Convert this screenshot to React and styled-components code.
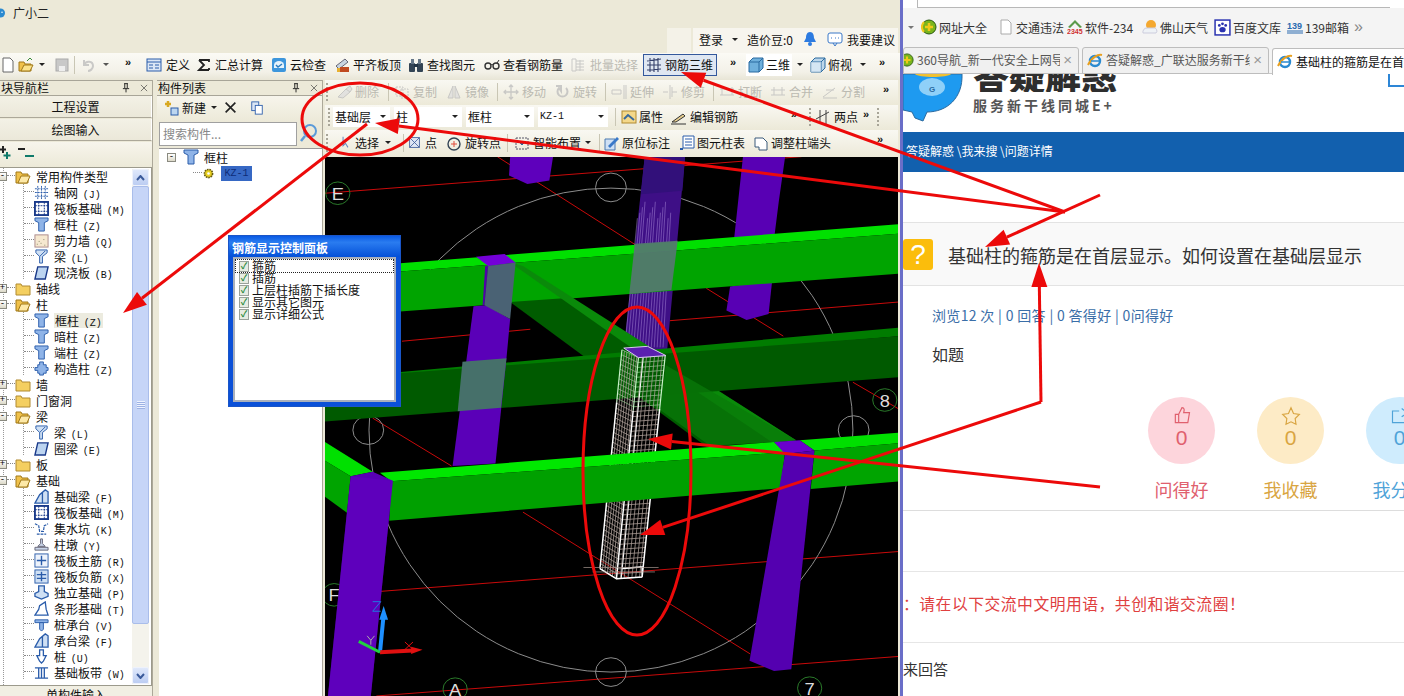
import React from 'react'
import styled, { createGlobalStyle } from 'styled-components'

const CJK = '"Noto Sans CJK SC", "Liberation Sans", sans-serif'
const MONO = '"Liberation Mono", "Noto Sans CJK SC", monospace'
const WEB = '"Liberation Sans", "Noto Sans CJK SC", sans-serif'

const Global = createGlobalStyle`
  html, body { margin: 0; padding: 0; background: #fff; overflow: hidden; }
  * { box-sizing: border-box; }
`

const Page = styled.div`
  width: 1404px;
  height: 696px;
  position: relative;
  overflow: hidden;
  display: flex;
  font-family: ${CJK};
  font-size: 12px;
  color: #111;
`

/* ---------- left: desktop app ---------- */

const AppWindow = styled.div`
  width: 900px;
  height: 696px;
  flex: none;
  display: flex;
  flex-direction: column;
  background: #ece9d8;
  overflow: hidden;
`

const TitleArea = styled.div`
  height: 53px;
  flex: none;
  display: flex;
  flex-direction: column;
  justify-content: space-between;
`

const TitleRow = styled.div`
  display: flex;
  align-items: center;
  gap: 5px;
  height: 24px;
  padding-top: 1px;
  font-size: 12px;
  color: #222;
  svg { margin-left: -4px; }
`

const UserRow = styled.div`
  align-self: flex-end;
  display: flex;
  height: 25px;
  margin-right: 2px;
  gap: 2px;
`

const UserBlank = styled.div`
  width: 24px;
  background: #f4f2e8;
`

const UserBar = styled.div`
  width: 205px;
  display: flex;
  align-items: center;
  padding: 0 0 3px 6px;
  gap: 9px;
  background: #f7f5ee;
`

const Caret = styled.i`
  display: inline-block;
  flex: none;
  width: 0;
  height: 0;
  border-left: 3px solid transparent;
  border-right: 3px solid transparent;
  border-top: 3px solid #222;
  margin: 0 ${p => p.$m || 0}px;
`

const ToolRow = styled.div`
  height: ${p => p.$h || 27}px;
  flex: none;
  display: flex;
  align-items: center;
  padding-bottom: 4px;
  overflow: hidden;
  white-space: nowrap;
  background: linear-gradient(#fbfaf5, #f3f1e8 70%, #e8e5d6);
`

const Tool = styled.div`
  flex: none;
  width: ${p => p.$w}px;
  height: 22px;
  display: flex;
  align-items: center;
  gap: ${p => p.$gap ?? 3}px;
  padding-left: ${p => p.$pad ?? 2}px;
  color: ${p => (p.$off ? '#a9a8a0' : '#111')};
  opacity: ${p => (p.$off ? 0.75 : 1)};
  background: ${p => (p.$white ? '#fff' : 'transparent')};
`

const ActiveTool = styled(Tool)`
  margin-left: 2px;
  border: 1px solid #33589c;
  background: #dfe7f2;
`

const More = styled.span`
  flex: none;
  width: ${p => p.$w || 14}px;
  margin-left: ${p => p.$ml || 0}px;
  font: bold 11px ${WEB};
  align-self: flex-start;
  padding-top: 3px;
  color: #111;
`

const Sep = styled.span`
  flex: none;
  width: 1px;
  height: 18px;
  background: #c9c6b4;
  margin: 0 ${p => p.$m ?? 3}px;
`

const Grip = styled.span`
  flex: none;
  width: 2px;
  height: 18px;
  margin: 0 ${p => p.$m ?? 3}px;
  background: repeating-linear-gradient(#a8a598 0 2px, transparent 2px 4px);
`

const Main = styled.div`
  flex: 1;
  display: flex;
  min-height: 0;
`

const NavPanel = styled.div`
  width: 153px;
  flex: none;
  display: flex;
  flex-direction: column;
  border-right: 1px solid #aca899;
`

const ListPanel = styled.div`
  width: 166px;
  flex: none;
  margin-left: 4px;
  display: flex;
  flex-direction: column;
  border-right: 1px solid #aca899;
`

const PanelHead = styled.div`
  height: 16px;
  flex: none;
  display: flex;
  align-items: center;
  justify-content: space-between;
  padding: 0 3px 0 1px;
  font-size: 12px;
  line-height: 14px;
  background: #ece9d8;
  border-top: 1px solid #a8a598;
  border-bottom: 1px solid #a8a598;
`

const HeadBtns = styled.span`
  display: flex;
  gap: 8px;
  align-items: center;
`

const NavButton = styled.div`
  height: 22px;
  flex: none;
  margin-bottom: 1px;
  display: flex;
  align-items: center;
  justify-content: center;
  background: linear-gradient(#f3f1e6, #ebe8d9);
  border-bottom: 1px solid #aca899;
  border-right: 1px solid #fff;
`

const TreeTools = styled.div`
  height: ${p => p.$h || 25}px;
  flex: none;
  display: flex;
  align-items: center;
  gap: 5px;
  padding-bottom: 3px;
  background: linear-gradient(#f7f5ec, #ece9d8);
`

const TreeFrame = styled.div`
  flex: 1;
  min-height: 0;
  display: flex;
  background: #fff;
  border: 1px solid #9c9a8c;
  border-left: none;
`

const Tree = styled.div`
  flex: 1;
  min-width: 0;
  background: linear-gradient(#999 50%, transparent 50%) 3px 0 / 1px 2px repeat-y;
`

const GroupRow = styled.div`
  height: 16px;
  display: flex;
  align-items: center;
  font-size: 12px;
`

const ChildRow = styled(GroupRow)`
  padding-left: 24px;
  background: linear-gradient(#999 50%, transparent 50%) 23px 0 / 1px 2px repeat-y;
`

const Expander = styled.span`
  flex: none;
  width: 9px;
  height: 9px;
  margin-left: ${p => p.$ml ?? -2}px;
  border: 1px solid #8a8a80;
  background: linear-gradient(#fff, #dcd9c8);
  font: 9px/7px ${MONO};
  text-align: center;
  color: #000;
`

const Elbow = styled.span`
  flex: none;
  width: ${p => p.$w || 10}px;
  height: 8px;
  align-self: flex-start;
  border-bottom: 1px dotted #888;
`

const NodeName = styled.span`
  margin-left: ${p => p.$ml ?? 6}px;
  padding: 0 ${p => p.$pad ?? 0}px;
  height: 15px;
  line-height: 15px;
  background: ${p => p.$bg || 'transparent'};
  color: ${p => p.$color || '#111'};
  white-space: nowrap;
`

const Code = styled.span`
  font: 10px ${MONO};
  margin-left: 2px;
`

const ScrollBar = styled.div`
  width: 17px;
  flex: none;
  margin: 1px 2px 1px 0;
  display: flex;
  flex-direction: column;
  background: #f4f3ec;
`

const ScrollBtn = styled.div`
  height: 17px;
  flex: none;
  border-radius: 2px;
  background: linear-gradient(#dfe8fb, #bccdf2);
  border: 1px solid #eef2fc;
  display: flex;
  align-items: center;
  justify-content: center;
`

const ScrollThumb = styled.div`
  height: 438px;
  flex: none;
  border-radius: 2px;
  background: #c6d5f7;
  border: 1px solid #a9bdea;
  display: flex;
  align-items: center;
  justify-content: center;
`

const ScrollRest = styled.div`
  flex: 1;
`

const ThumbLines = styled.span`
  width: 8px;
  height: 8px;
  background: repeating-linear-gradient(#eef3ff 0 1px, #9db2e4 1px 2px);
`

const BottomBtn = styled.div`
  height: 10px;
  flex: none;
  text-align: center;
  line-height: 18px;
  overflow: hidden;
  background: #f1efe3;
`

const SearchRow = styled.div`
  height: 26px;
  flex: none;
  display: flex;
  align-items: flex-start;
  background: #ece9d8;
`

const SearchBox = styled.div`
  width: 138px;
  height: 24px;
  margin-left: 2px;
  padding-left: 3px;
  line-height: 21px;
  color: #888;
  background: #fff;
  border: 1px solid #a0a0a0;
`

const ListTree = styled.div`
  flex: 1;
  background: #fff;
  border-top: 1px solid #999;
  padding: 0 0 0 8px;
  margin-left: 2px;
`

const SelectedKey = styled.span`
  margin-left: 6px;
  width: 31px;
  height: 15px;
  font: 10px/15px ${MONO};
  text-align: center;
  color: #0e2c78;
  background: #3668c4;
`

const Indent = styled.span`
  flex: none;
  width: ${p => p.$w}px;
`

const Viewport = styled.div`
  width: 573px;
  flex: none;
  margin-left: 2px;
  display: flex;
  flex-direction: column;
`

const ViewRow = styled(ToolRow)`
  height: ${p => p.$h}px;
  padding-bottom: 2px;
  background: linear-gradient(#f9f8f2, #ece9d8);
`

const Combo = styled.div`
  flex: none;
  width: ${p => p.$w}px;
  height: 20px;
  display: flex;
  align-items: center;
  justify-content: space-between;
  padding: 0 4px 0 2px;
  background: #fff;
  margin-right: 4px;
`

const ComboKey = styled.span`
  font: 10px ${MONO};
`

const Scene = styled.svg`
  display: block;
  width: 573px;
  height: 539px;
  background: #000;
  * { vector-effect: non-scaling-stroke; }
`

/* ---------- floating dialog ---------- */

const Dialog = styled.div`
  position: absolute;
  left: 228px;
  top: 235px;
  width: 173px;
  height: 172px;
  display: flex;
  flex-direction: column;
  padding: 0 4px 4px 4px;
  background: #0a50d8;
  border: 1px solid #1a55c8;
`

const DialogTitle = styled.div`
  height: 21px;
  flex: none;
  margin: 0 -4px;
  padding-left: 3px;
  font: bold 12px/23px ${CJK};
  color: #fff;
  background: linear-gradient(#0a5ae4, #2a7cf0 30%, #0450d8);
`

const DialogBody = styled.div`
  flex: 1;
  background: #fff;
  border: 2px solid #a9b0bc;
  padding: 1px 1px;
`

const CheckRow = styled.div`
  height: 12px;
  display: flex;
  align-items: center;
  gap: 3px;
  font-size: 12px;
  line-height: 12px;
  white-space: nowrap;
  padding-left: 3px;
  outline: ${p => (p.$focus ? '1px dotted #222' : 'none')};
`

const Check = styled.span`
  flex: none;
  width: 10px;
  height: 11px;
  border: 1px solid #9aa29a;
  background: #e6ece2;
  color: #2a8a3a;
  font: bold 9px/9px ${WEB};
  text-align: center;
`

/* ---------- right: browser ---------- */

const Divider = styled.div`
  width: 3px;
  flex: none;
  background: #6a6ec8;
`

const Browser = styled.div`
  flex: 1;
  min-width: 0;
  display: flex;
  flex-direction: column;
  background: #fff;
  overflow: hidden;
`

const AddressEdge = styled.div`
  height: 8px;
  flex: none;
  background: #fff;
  border-bottom: 1px solid #b8b8b8;
  margin: 0 14px;
  border-left: 1px solid #b8b8b8;
`

const Chrome = styled.div`
  height: 66px;
  flex: none;
  display: flex;
  flex-direction: column;
  background: #f4f4f4;
  border-bottom: 1px solid #c8c8c8;
`

const Bookmarks = styled.div`
  height: 38px;
  flex: none;
  display: flex;
  align-items: center;
  padding: 0 0 0 5px;
  font-size: 12px;
  color: #333;
  white-space: nowrap;
`

const Mark = styled.div`
  flex: none;
  width: ${p => p.$w}px;
  display: flex;
  align-items: center;
  gap: 2px;
`

const MarkMore = styled.span`
  color: #888;
  font: 16px ${WEB};
`

const BrowserCaret = styled(Caret)`
  border-top-color: #777;
  margin-right: 7px;
`

const Tabs = styled.div`
  height: 28px;
  flex: none;
  display: flex;
  gap: 3px;
  align-items: flex-end;
`

const Tab = styled.div`
  flex: none;
  width: ${p => p.$w}px;
  height: 27px;
  display: flex;
  align-items: center;
  gap: 3px;
  padding: 0 6px 2px ${p => p.$pl ?? 4}px;
  margin-bottom: ${p => (p.$active ? -1 : 0)}px;
  background: ${p => (p.$active ? '#fff' : '#f0f0f0')};
  color: ${p => (p.$active ? '#111' : '#555')};
  border: 1px solid #bdbdbd;
  border-bottom: ${p => (p.$active ? 'none' : '1px solid #bdbdbd')};
  border-radius: 3px 3px 0 0;
  overflow: hidden;
  white-space: nowrap;
  svg { margin-left: ${p => p.$iconShift || 0}px; }
`

const TabText = styled.span`
  flex: 1;
  min-width: 0;
  overflow: hidden;
`

const TabClose = styled.span`
  flex: none;
  font: 15px ${WEB};
  color: #999;
`

const PageHeader = styled.div`
  height: 58px;
  flex: none;
  display: flex;
  overflow: hidden;
`

const Mascot = styled.svg`
  flex: none;
`

const Brand = styled.div`
  margin-left: 10px;
`

const BrandBig = styled.div`
  height: 18px;
  overflow: hidden;
  font: 900 36px/36px ${CJK};
  color: #2e2e2e;
  display: flex;
  align-items: flex-end;
  width: 146px;
`

const BrandSub = styled.div`
  margin-top: 3px;
  font: bold 14px/20px ${CJK};
  letter-spacing: 3px;
  color: #555;
  white-space: nowrap;
`

const CornerBit = styled.div`
  margin-left: auto;
  width: 16px;
  height: 13px;
  border-left: 2px solid #2d86d6;
  border-bottom: 2px solid #2d86d6;
  align-self: flex-start;
`

const Crumbs = styled.div`
  height: 40px;
  flex: none;
  padding: 0 0 3px 3px;
  display: flex;
  align-items: center;
  font-size: 12px;
  color: #fff;
  background: #1260ae;
`

const QuestionBar = styled.div`
  height: 64px;
  flex: none;
  margin-top: 50px;
  display: flex;
  align-items: center;
  gap: 15px;
  background: #f9f9f9;
  border-top: 1px solid #e3e3e3;
  border-bottom: 1px solid #e3e3e3;
`

const QuestionMark = styled.div`
  width: 30px;
  height: 31px;
  flex: none;
  border-radius: 3px;
  background: #fbbd0c;
  color: #fff;
  font: 28px/31px ${WEB};
  text-align: center;
`

const QuestionTitle = styled.div`
  font-size: 18px;
  line-height: 26px;
  padding-top: 2px;
  color: #333;
  white-space: nowrap;
`

const Stats = styled.div`
  margin: 19px 0 0 29px;
  height: 20px;
  line-height: 20px;
  font-size: 14px;
  letter-spacing: 0.33px;
  color: #3a6ea8;
  white-space: nowrap;
`

const Body = styled.div`
  margin: 18px 0 0 29px;
  height: 22px;
  line-height: 22px;
  font-size: 16px;
  color: #333;
`

const Actions = styled.div`
  flex: none;
  height: 114px;
  margin-top: 32px;
  padding-left: 245px;
  display: flex;
  gap: 42px;
  border-bottom: 1px solid #ddd;
`

const Action = styled.div`
  flex: none;
  width: 67px;
  display: flex;
  flex-direction: column;
  align-items: center;
  color: ${p => p.$color};
`

const Bubble = styled.div`
  width: 67px;
  height: 67px;
  flex: none;
  border-radius: 50%;
  background: ${p => p.$bg};
  display: flex;
  flex-direction: column;
  align-items: center;
  padding-top: 9px;
  font: 21px/24px ${WEB};
`

const ActionLabel = styled.div`
  margin-top: 13px;
  font-size: 18px;
  line-height: 24px;
  white-space: nowrap;
`

const Rules = styled.div`
  height: 72px;
  flex: none;
  margin-top: 60px;
  padding-bottom: 8px;
  display: flex;
  align-items: center;
  font-size: 15.8px;
  letter-spacing: 0.5px;
  color: #e0403f;
  white-space: nowrap;
  border-top: 1px solid #e6e6e6;
  border-bottom: 1px solid #e6e6e6;
`

const AnswerLabel = styled.div`
  margin-top: 15px;
  font-size: 15px;
  line-height: 22px;
  color: #333;
`

const Annotations = styled.svg`
  position: absolute;
  left: 0;
  top: 0;
  width: 1404px;
  height: 696px;
  pointer-events: none;
`

/* ---------- small drawings ---------- */

const B = '#2a5caa'
const L = '#8fb4e8'
const G = {
  doc: <path d="M3 1h7l3 3v11H3z" fill="#fff" stroke="#666" />,
  open: <><path d="M1 5h5l1 2h6v7H1z" fill="#f0c14a" stroke="#a07818" /><path d="M3 14l3-6h9l-3 6z" fill="#fbe28a" stroke="#a07818" /><path d="M9 4l3-3 2 2" fill="none" stroke="#3a8a3a" /></>,
  save: <><rect x="2" y="2" width="12" height="12" fill="#c8c8c8" stroke="#aaa" /><rect x="5" y="9" width="6" height="5" fill="#eee" /></>,
  undo: <path d="M4 8c2-5 9-4 9 1 0 3-3 5-5 5M4 3v5h5" fill="none" stroke="#bbb" strokeWidth="2" />,
  define: <><rect x="1" y="2" width="14" height="12" fill="#dbe6f5" stroke={B} /><path d="M1 5h14M3 8h4M3 11h4M9 8h4M9 11h4" stroke={B} /></>,
  sigma: <path d="M3 3h10v2M13 13H3l5-5-5-5M13 11v2" fill="none" stroke="#222" strokeWidth="1.8" />,
  cloud: <><rect x="1" y="1" width="14" height="14" rx="2" fill="#3d96dc" /><path d="M3 8a5 4 0 0 1 10 0v3H3z" fill="#e6f3fb" /><path d="M5 8l2 2 4-3" fill="none" stroke="#2a7cc0" strokeWidth="1.5" /></>,
  level: <><path d="M2 9l9-7 3 3-9 7z" fill="#c8d4e0" stroke="#667" /><rect x="6" y="10" width="9" height="5" fill="#c04a20" /><rect x="3" y="11" width="3" height="4" fill="#e8b030" /></>,
  find: <><rect x="1" y="6" width="6" height="9" rx="1" fill="#345" /><rect x="9" y="6" width="6" height="9" rx="1" fill="#345" /><rect x="3" y="2" width="3" height="5" fill="#678" /><rect x="10" y="2" width="3" height="5" fill="#678" /><rect x="6" y="7" width="4" height="3" fill="#234" /></>,
  glasses: <><circle cx="4" cy="9" r="3" fill="none" stroke="#333" strokeWidth="1.4" /><circle cx="12" cy="9" r="3" fill="none" stroke="#333" strokeWidth="1.4" /><path d="M7 8c1-1 1-1 2 0M13 6l2-3" stroke="#333" fill="none" /></>,
  batch: <path d="M1 2h4v12H1zM5 4h8M5 7h8M5 10h8M5 13h8M9 3v11" fill="none" stroke="#bbb" />,
  rebar: <path d="M1 4l14-2M1 8h14M1 13l14-1M4 1v14M8 1v14M12 1v14" fill="none" stroke="#34406a" strokeWidth="1.1" />,
  cube: <><path d="M1 5l4-4h10v10l-4 4H1z" fill="#6fb0dc" stroke="#2a6aa0" /><path d="M1 5h10v10M11 5l4-4" fill="none" stroke="#2a6aa0" /></>,
  box: <><path d="M1 5l4-4h10v10l-4 4H1z" fill="#bcd6ea" stroke="#2a6aa0" /><path d="M1 5h10v10M11 5l4-4" fill="none" stroke="#2a6aa0" /><rect x="1" y="5" width="10" height="10" fill="#e6f0f8" opacity=".6" /></>,
  bell: <><path d="M8 1c3 0 4 3 4 6l2 4H2l2-4c0-3 1-6 4-6z" fill="#2d7be0" /><circle cx="8" cy="13" r="2" fill="#2d7be0" /></>,
  note: <><rect x="1" y="2" width="14" height="10" rx="2" fill="#fff" stroke="#3a78c8" /><path d="M6 12l2 3 2-3M4 7h1M8 7h1M11 7h1" fill="none" stroke="#3a78c8" /></>,
  erase: <path d="M1 13l8-8 4 3-7 6zM9 5l4-3 2 3-2 3" fill="#ddd" stroke="#bbb" />,
  copy: <path d="M2 3h7v9H2zM7 5h7v9H7z" fill="none" stroke="#bbb" strokeDasharray="2 1" />,
  mirror: <path d="M7 2L2 14h5zM9 2l5 12H9z" fill="#ddd" stroke="#bbb" />,
  move: <path d="M8 1v14M1 8h14M6 3l2-2 2 2M6 13l2 2 2-2M3 6L1 8l2 2M13 6l2 2-2 2" fill="none" stroke="#bbb" strokeWidth="1.3" />,
  rotate: <path d="M12 4a5 5 0 1 1-7 0l2 3V2H2" fill="none" stroke="#bbb" strokeWidth="2" />,
  extend: <path d="M1 6h9v4H1zM13 1v14M15 1v14" fill="none" stroke="#bbb" />,
  trim: <path d="M1 8h5M10 8h5M8 1v14M10 3v10" fill="none" stroke="#bbb" />,
  cut: <path d="M1 5h5M10 5h5M1 11h14M3 3v8M13 3v8" fill="none" stroke="#bbb" />,
  merge: <path d="M1 6h14M1 11h14M4 3v8M12 3v8" fill="none" stroke="#bbb" />,
  split: <path d="M1 13l12-9M1 14h14M4 6h8" fill="none" stroke="#bbb" />,
  prop: <><rect x="1" y="2" width="14" height="12" fill="#f4d88a" stroke="#b08a30" /><path d="M3 10l4-4 6 5" fill="none" stroke="#3a6a9a" strokeWidth="2" /></>,
  pen: <path d="M1 13l11-8 2 2-9 6zM0 15h15" fill="#e8cf90" stroke="#333" />,
  twopt: <path d="M5 1v14M11 1v14M1 10l13-7" fill="none" stroke="#444" />,
  cursor: <path d="M5 1v11l3-3 3 5" fill="none" stroke="#6a8ac0" strokeWidth="1.3" />,
  point: <><rect x="2" y="2" width="12" height="12" fill="#dfe6f4" stroke="#3a5a9a" /><path d="M2 2l12 12M14 2L2 14" stroke="#3a5a9a" /></>,
  rotpt: <><circle cx="8" cy="9" r="6" fill="none" stroke="#345" strokeWidth="1.4" /><path d="M5 9h6M8 6v6" stroke="#e04a3a" /></>,
  smart: <><rect x="2" y="3" width="12" height="11" fill="none" stroke="#556" strokeDasharray="2 1" /><path d="M6 8h4M8 6v4" stroke="#2a6aa0" strokeWidth="2" /></>,
  mark: <><path d="M1 4h10v11H1z" fill="#cfe0f4" stroke="#4a78b0" /><path d="M4 11l9-9 2 2-9 9z" fill="#3a78c8" /></>,
  table: <><path d="M4 1h11v12H4z" fill="#fff" stroke={B} /><path d="M6 4h7M6 7h7M6 10h7" stroke={B} /><rect x="1" y="13" width="3" height="2" fill={B} /></>,
  adjust: <path d="M2 3h8l4 4v8H6v-3H2z" fill="#fff" stroke="#3a5a7a" />,
  add: <><path d="M5 1v6M2 4h6" stroke="#d8a820" strokeWidth="2.5" /><rect x="8" y="8" width="7" height="7" fill="#bcd6f0" stroke={B} /></>,
  del: <path d="M2 2l12 12M14 2L2 14" stroke="#222" strokeWidth="2" />,
  dup: <><rect x="2" y="1" width="8" height="10" fill="#dbe6f5" stroke={B} /><rect x="6" y="5" width="8" height="10" fill="#fff" stroke={B} /></>,
  gear: <><circle cx="8" cy="8" r="5" fill="#e8d020" stroke="#665a10" strokeDasharray="2 1" strokeWidth="2" /><circle cx="8" cy="8" r="1.6" fill="#fff" /></>,
  folder: <path d="M1 4h5l1 2h8v9H1z" fill="#f4cf60" stroke="#b08a30" />,
  folderOpen: <><path d="M1 4h5l1 2h6v9H1z" fill="#f0c14a" stroke="#a07818" /><path d="M3 15l3-7h9l-3 7z" fill="#fde9a8" stroke="#a07818" /></>,
  grid: <path d="M4 1v14M8 1v14M12 1v14M1 4h14M1 8h14M1 12h14" stroke={B} strokeDasharray="2 1" />,
  raft: <><rect x="1" y="1" width="14" height="14" fill="#fff" stroke="#1a3a8a" strokeWidth="2" /><path d="M5 1v14M11 1v14M1 5h14M1 11h14" stroke="#1a3a8a" strokeDasharray="2 1" /></>,
  column: <path d="M1 1h14v3l-4 2v9H5V6L1 4z" fill={L} stroke={B} />,
  wall: <><rect x="1" y="2" width="14" height="13" fill="#f6e8d0" stroke="#a88" /><path d="M3 12h1M7 11h1M11 13h1M5 9h1M10 7h1" stroke="#886" /></>,
  beam: <path d="M2 1h12v3L9 8v7H6V8L2 4zM6 8l6-6" fill="#cfe0f4" stroke={B} />,
  slab: <path d="M4 2h11l-3 13H1z" fill="#bcd4f0" stroke="#1a3a8a" strokeWidth="1.5" />,
  gz: <path d="M6 1h4v3h3v3h2v3h-2v3h-3v2H6v-2H4v-3H1V7h3V4h2z" fill={L} stroke={B} />,
  fbeam: <path d="M1 15l5-9 6-5 3 2v12zM9 4v11" fill="#cfe0f4" stroke={B} strokeWidth="1.4" />,
  pit: <path d="M1 3l4 2 1 6h4l1-6 4-2M3 14h10" fill="none" stroke={B} strokeWidth="1.3" strokeDasharray="3 1" />,
  pier: <path d="M7 2h2v5l3 3H4l3-3zM1 11h14v3H1z" fill="#c8d4e8" stroke="#667" />,
  main: <><rect x="1" y="1" width="14" height="14" fill="#eef3fb" stroke={B} /><path d="M8 3v10M3 8h10" stroke={B} strokeWidth="1.5" /></>,
  neg: <><rect x="1" y="1" width="14" height="14" fill="#cfe0f4" stroke={B} /><path d="M8 3v10M3 6h10M3 10h10" stroke={B} strokeWidth="1.5" /></>,
  indep: <path d="M5 1h6v6l4 2v3l-7 3-7-3V9l4-2z" fill="#cfe0f4" stroke={B} strokeWidth="1.4" />,
  strip: <path d="M1 15l4-6 1-4 6-4 1 8 2 6z" fill="#fff" stroke={B} strokeWidth="1.4" />,
  cap: <><path d="M1 3h14v3H1z" fill={L} stroke={B} /><path d="M6 6h4v7l-2 2-2-2z" fill={L} stroke={B} /></>,
  pile: <path d="M6 1h4v6h3l-3 6-2 2-2-2-3-6h3z" fill="#fff" stroke={B} strokeWidth="1.4" />,
  band: <path d="M1 3h14M1 14h14M5 3v11M8 3v11M11 3v11" stroke={B} strokeWidth="1.4" />,
  weburl: <><circle cx="8" cy="8" r="7" fill="#79b51c" stroke="#2a5a10" /><path d="M8 4v8M4 8h8" stroke="#f0c81a" strokeWidth="2.5" /><path d="M3 3a7 7 0 0 0 0 10" fill="none" stroke="#f0c81a" strokeWidth="2" /></>,
  page: <path d="M3 1h7l3 3v11H3z" fill="#fff" stroke="#aaa" />,
  soft: <><path d="M8 1l7 7-2 1-5-5-5 5-2-1z" fill="#5a9a4a" /><text x="0" y="15" fontSize="7" fontFamily={WEB} fontWeight="bold" fill="#d03030">2345</text></>,
  sun: <><circle cx="9" cy="6" r="5" fill="#f4a830" /><path d="M1 14a4 4 0 0 1 4-5h6a3 3 0 0 1 3 5z" fill="#eef2f6" stroke="#ccd" /></>,
  paw: <><rect x="1" y="1" width="14" height="14" fill="#fff" stroke="#2a32b0" strokeWidth="1.4" /><ellipse cx="8" cy="10" rx="3" ry="2.4" fill="#2a32b0" /><circle cx="5" cy="6" r="1.3" fill="#2a32b0" /><circle cx="11" cy="6" r="1.3" fill="#2a32b0" /><circle cx="8" cy="4.5" r="1.3" fill="#2a32b0" /></>,
  mail: <><text x="0" y="10" fontSize="9" fontFamily={WEB} fontWeight="bold" fill="#2a6ab0">139</text><path d="M0 12h16M0 14h16" stroke="#2a6ab0" /></>,
  ie: <><circle cx="8" cy="9" r="5" fill="none" stroke="#2a8ad0" strokeWidth="2.4" /><path d="M1 13C5 5 11 2 15 3" fill="none" stroke="#e8a020" strokeWidth="2" /><path d="M4 9h9" stroke="#2a8ad0" strokeWidth="1.5" /></>,
  app: <><circle cx="6" cy="8" r="6" fill="#2a8ad0" /><circle cx="4" cy="7" r="1" fill="#fff" /><circle cx="8" cy="7" r="1" fill="#fff" /></>,
  pin: <path d="M5 1h6M6 1v7M10 1v7M3 9h10M8 9v6" fill="none" stroke="#111" strokeWidth="1.4" />,
  close: <path d="M3 3l10 10M13 3L3 13" stroke="#333" />,
  expandAll: <path d="M4 1v6M1 4h6" stroke="#333" strokeWidth="2" />,
  plusTeal: <path d="M9 6v7M6 9.5h7" stroke="#0f7a6a" strokeWidth="2" />
}

const Glyph = ({ k, s = 16 }) => (
  <svg width={s} height={s} viewBox="0 0 16 16" style={{ flex: 'none', display: 'block' }}>{G[k]}</svg>
)

const TOP_TOOLS = [
  { w: 16, k: 'doc', pad: 0 },
  { w: 36, k: 'open', caret: true },
  { w: 20, k: 'save' }
]

const TOP_TOOLS_2 = [
  { w: 50, k: 'define', t: '定义', gap: 4 },
  { w: 75, k: 'sigma', t: '汇总计算' },
  { w: 63, k: 'cloud', t: '云检查' },
  { w: 74, k: 'level', t: '平齐板顶' },
  { w: 76, k: 'find', t: '查找图元' },
  { w: 87, k: 'glasses', t: '查看钢筋量' },
  { w: 72, k: 'batch', t: '批量选择', off: true }
]

const EDIT_TOOLS = [
  { w: 56, k: 'erase', t: '删除', gap: 2, pad: 8 },
  'sep',
  { w: 52, k: 'copy', t: '复制' },
  { w: 50, k: 'mirror', t: '镜像' },
  'sep',
  { w: 51, k: 'move', t: '移动' },
  { w: 50, k: 'rotate', t: '旋转' },
  'sep',
  { w: 51, k: 'extend', t: '延伸' },
  { w: 50, k: 'trim', t: '修剪' },
  'sep',
  { w: 51, k: 'cut', t: '打断' },
  { w: 52, k: 'merge', t: '合并' },
  { w: 47, k: 'split', t: '分割' }
]

const TREE = [
  { name: '常用构件类型', open: true, kids: [['grid', '轴网', 'J'], ['raft', '筏板基础', 'M'], ['column', '框柱', 'Z'], ['wall', '剪力墙', 'Q'], ['beam', '梁', 'L'], ['slab', '现浇板', 'B']] },
  { name: '轴线' },
  { name: '柱', open: true, kids: [['column', '框柱', 'Z', true], ['column', '暗柱', 'Z'], ['column', '端柱', 'Z'], ['gz', '构造柱', 'Z']] },
  { name: '墙' },
  { name: '门窗洞' },
  { name: '梁', open: true, kids: [['beam', '梁', 'L'], ['slab', '圈梁', 'E']] },
  { name: '板' },
  { name: '基础', open: true, kids: [['fbeam', '基础梁', 'F'], ['raft', '筏板基础', 'M'], ['pit', '集水坑', 'K'], ['pier', '柱墩', 'Y'], ['main', '筏板主筋', 'R'], ['neg', '筏板负筋', 'X'], ['indep', '独立基础', 'P'], ['strip', '条形基础', 'T'], ['cap', '桩承台', 'V'], ['fbeam', '承台梁', 'F'], ['pile', '桩', 'U'], ['band', '基础板带', 'W']] }
]

const CHECKS = ['箍筋', '插筋', '上层柱插筋下插长度', '显示其它图元', '显示详细公式']

const BOOKMARKS = [
  { w: 77, k: 'weburl', t: '网址大全' },
  { w: 69, k: 'page', t: '交通违法' },
  { w: 75, k: 'soft', t: '软件-234' },
  { w: 72, k: 'sun', t: '佛山天气' },
  { w: 73, k: 'paw', t: '百度文库' },
  { w: 67, k: 'mail', t: '139邮箱' }
]

const ACTIONS = [
  { label: '问得好', bg: '#fdd5dc', color: '#e0606e', icon: <path d="M4 10h4v10H4zM8 10l4-8c3 0 3 3 2 6h7l-2 12H8" fill="none" stroke="currentColor" strokeWidth="1.4" /> },
  { label: '我收藏', bg: '#fdebc6', color: '#d9a542', icon: <path d="M12 2l3 7 7 1-5 5 1 7-6-3-6 3 1-7-5-5 7-1z" fill="none" stroke="currentColor" strokeWidth="1.4" /> },
  { label: '我分享', bg: '#cfecfd', color: '#4fa3d8', icon: <path d="M20 12v8H3V6h8M14 3l7 5-7 5" fill="none" stroke="currentColor" strokeWidth="1.4" /> }
]

/* 3D view, in a 1568-wide drawing space stretched to the panel */
const RED = '#c80a0a'
const GRID_LINES = [
  [0, 97, 1300, -10], [470, -10, 850, 250], [210, 530, 560, 495], [940, 470, 1568, 415],
  [1040, 375, 1250, 515], [1440, 650, 1568, 730], [130, 755, 345, 895],
  [540, 1030, 1160, 1445], [150, 1262, 1568, 1145], [140, 1568, 1568, 1452]
]
const HELP_RINGS = [[780, 80], [118, 790], [1442, 790], [780, 1498]]
const AXIS_BUBBLES = [['E', 35, 97], ['F', 25, 1272], ['A', 355, 1548], ['7', 1322, 1545], ['8', 1527, 702]]

const lerp = (a, b, t) => a + (b - a) * t
const pt = (p, q, t) => `${lerp(p[0], q[0], t)},${lerp(p[1], q[1], t)}`

const A1 = [810, 555], A2 = [750, 1195]
const C1 = [855, 578], C2 = [795, 1225]
const D1 = [928, 572], D2 = [865, 1220]

function WireCage () {
  const rungs = Array.from({ length: 46 }, (_, i) => i / 45)
  const rods = [0.15, 0.3, 0.45, 0.6, 0.75, 0.9]
  const split = 0.24
  const edge = (p, q, a, b) => `M${pt(p, q, a)} L${pt(p, q, b)}`
  return (
    <g fill="none">
      {rungs.map(t => (
        <polyline key={t} points={`${pt(A1, A2, t)} ${pt(C1, C2, t)} ${pt(D1, D2, t)}`} stroke={t < split ? '#7fc07f' : '#a89a94'} strokeWidth="0.8" />
      ))}
      {rods.map(r => (
        <g key={r} stroke="#a89a94" strokeWidth="0.8">
          <line x1={lerp(A1[0], C1[0], r)} y1={lerp(A1[1], C1[1], r)} x2={lerp(A2[0], C2[0], r)} y2={lerp(A2[1], C2[1], r)} />
          <line x1={lerp(C1[0], D1[0], r)} y1={lerp(C1[1], D1[1], r)} x2={lerp(C2[0], D2[0], r)} y2={lerp(C2[1], D2[1], r)} />
        </g>
      ))}
      <path d={`${edge(A1, A2, 0, split)} ${edge(C1, C2, 0, split)} ${edge(D1, D2, 0, split)}`} stroke="#c8f0c8" strokeWidth="1.2" />
      <path d={`${edge(A1, A2, split, 1)} ${edge(C1, C2, split, 1)} ${edge(D1, D2, split, 1)} M${A2} L${C2} L${D2} M812,1195 L865,1190 L${D2}`} stroke="#fff" strokeWidth="1.5" />
      <path d="M868,578 L808,1225" stroke="#fff" strokeWidth="1" />
      <polygon points="815,550 880,545 930,572 855,578" stroke="#d8c8f0" fill="#5a20b0" strokeWidth="1" />
      <path d="M705,1192H910M730,1205H900" stroke="#a89890" strokeWidth="0.7" />
    </g>
  )
}

function View3D () {
  const rebars = Array.from({ length: 14 }, (_, i) => i)
  return (
    <Scene viewBox="0 -9 1563 1577" preserveAspectRatio="none">
      {GRID_LINES.map(([a, b, c, d], i) => <line key={i} x1={a} y1={b} x2={c} y2={d} stroke={RED} strokeWidth="1" />)}
      <ellipse cx="780" cy="790" rx="660" ry="708" fill="none" stroke="#8c8c8c" strokeWidth="1" />
      {HELP_RINGS.map(([x, y]) => <circle key={x + '-' + y} cx={x} cy={y} r="42" fill="none" stroke="#8c8c8c" strokeWidth="1" />)}
      {AXIS_BUBBLES.map(([t, x, y]) => (
        <g key={t}>
          <circle cx={x} cy={y} r="33" fill="none" stroke="#2a7a2a" strokeWidth="1" />
          <text x={x} y={y + 19} textAnchor="middle" fontFamily={WEB} fontSize="50" fill="#ddd">{t}</text>
        </g>
      ))}

      {/* back columns */}
      <polygon points="505,-9 622,-9 612,60 552,70 502,45" fill="#5e00bc" />
      <polygon points="1140,-9 1255,-9 1238,120 1225,230 1115,240" fill="#5800b4" />
      <polygon points="1105,370 1220,350 1210,450 1150,468 1095,440" fill="#5800b4" />
      <polygon points="872,-9 982,-9 932,572 815,550" fill="#3e0f86" />
      <polygon points="872,-9 982,-9 975,90 862,100" fill="#32107a" />
      <g stroke="#a988d8" strokeWidth="0.5">
        {rebars.map(i => <line key={i} x1={852 + i * 7} y1={170 - (i % 4) * 16} x2={818 + i * 8} y2="548" />)}
      </g>

      {/* back beam */}
      <polygon points="205,302 1568,187 1568,215 205,326" fill="#00e000" />
      <polygon points="205,326 1568,215 1568,332 205,443" fill="#00a400" />
      <polygon points="845,245 962,236 945,380 830,392" fill="#54786e" opacity="0.94" />

      {/* diagonal beam */}
      <polygon points="505,415 670,403 1285,820 1040,838" fill="#005c00" />
      <polygon points="505,300 540,310 1285,820 1220,826 810,530" fill="#0a8a0a" />

      {/* middle beam */}
      <polygon points="0,640 1568,490 1568,515 0,660" fill="#007c00" />
      <polygon points="0,640 1568,515 1568,635 0,765" fill="#005a00" />
      <polygon points="930,600 1285,820 1215,826 1050,836 900,720 925,640" fill="#0a7a0a" opacity="0.75" />

      {/* left column, back */}
      <polygon points="405,428 440,425 505,465 495,580 465,888 348,895" fill="#5a00b8" />
      <polygon points="375,590 495,580 480,725 362,735" fill="#46706a" />
      <polygon points="445,310 520,300 505,465 435,425" fill="#4a6274" />
      <polygon points="412,283 490,275 520,300 445,310" fill="#7400d8" />
      <polygon points="437,310 445,310 435,425 430,425" fill="#5000a8" />

      <WireCage />

      {/* front beams */}
      <polygon points="0,825 130,912 70,925 0,880" fill="#00e000" />
      <polygon points="0,880 70,925 60,1032 0,985" fill="#00a400" />
      <polygon points="150,915 1225,825 1255,855 180,940" fill="#00e800" />
      <polygon points="180,940 1255,855 1242,960 175,1055" fill="#00a000" />
      <polygon points="1295,820 1568,797 1568,828 1335,850" fill="#00e000" />
      <polygon points="1335,850 1568,828 1568,940 1325,962" fill="#00a400" />

      {/* front columns */}
      <polygon points="70,925 130,912 185,938 125,1568 8,1568" fill="#5800b4" />
      <polygon points="70,925 185,938 125,1568 8,1568" fill="#6400c4" opacity="0.5" />
      <polygon points="1225,825 1295,820 1335,850 1255,860" fill="#6a00cc" />
      <polygon points="1255,860 1335,850 1272,1490 1225,1495 1158,1465" fill="#5400b0" />

      {/* axis tripod */}
      <line x1="150" y1="1440" x2="160" y2="1330" stroke="#1e90ff" strokeWidth="4" />
      <polygon points="160,1305 172,1345 148,1345" fill="#1e90ff" />
      <line x1="150" y1="1440" x2="240" y2="1435" stroke="#e01010" strokeWidth="4" />
      <polygon points="266,1433 235,1445 235,1424" fill="#e01010" />
      <line x1="150" y1="1440" x2="92" y2="1408" stroke="#20d040" strokeWidth="3" />
      <path d="M130,1292H152L130,1320H152" fill="none" stroke="#1e78e0" strokeWidth="1" />
      <path d="M218,1410L240,1432M240,1410L218,1432" fill="none" stroke="#e01010" strokeWidth="1" />
      <path d="M115,1392L125,1405L135,1392M125,1405V1418" fill="none" stroke="#aaa" strokeWidth="1" />
    </Scene>
  )
}

const ARROW_RED = '#ec0a0a'

function Arrow ({ x1, y1, x2, y2 }) {
  const a = Math.atan2(y2 - y1, x2 - x1)
  const len = 24
  const half = 8
  const bx = x2 - Math.cos(a) * len
  const by = y2 - Math.sin(a) * len
  const nx = -Math.sin(a) * half
  const ny = Math.cos(a) * half
  return (
    <>
      <line x1={x1} y1={y1} x2={bx} y2={by} stroke={ARROW_RED} strokeWidth="3" />
      <polygon points={`${x2},${y2} ${bx + nx},${by + ny} ${bx - nx},${by - ny}`} fill={ARROW_RED} />
    </>
  )
}

const ARROWS = [
  [1065, 212, 375, 123],
  [1065, 212, 681, 72],
  [1100, 195, 985, 247],
  [1041, 402, 1039, 263],
  [1041, 402, 640, 535],
  [1100, 487, 648, 439],
  [367, 124, 123, 313]
]

function ToolItem ({ w, k, t, off, gap, pad, caret, s }) {
  return (
    <Tool $w={w} $off={off} $gap={gap} $pad={pad}>
      <Glyph k={k} s={s} />
      {t && <span>{t}</span>}
      {caret && <Caret $m={2} />}
    </Tool>
  )
}

function AppToolbar () {
  return (
    <ToolRow>
      {TOP_TOOLS.map(item => <ToolItem key={item.k} {...item} />)}
      <Sep $m={2} />
      <Tool $w={48} $off $pad={3}><Glyph k="undo" /><Caret $m={4} /></Tool>
      <More $w={19}>»</More>
      {TOP_TOOLS_2.map(item => <ToolItem key={item.k} {...item} />)}
      <ActiveTool $w={74}><Glyph k="rebar" /><span>钢筋三维</span></ActiveTool>
      <More $w={16} $ml={13}>»</More>
      <Tool $w={46} $white $gap={2}><Glyph k="cube" /><span>三维</span></Tool>
      <Caret $m={5} />
      <Tool $w={62} $gap={2}><Glyph k="box" /><span>俯视</span><Caret $m={6} /></Tool>
      <More $ml={9}>»</More>
    </ToolRow>
  )
}

function TreeRows () {
  return TREE.map(group => (
    <React.Fragment key={group.name}>
      <GroupRow>
        <Expander>{group.open ? '-' : '+'}</Expander>
        <Elbow $w={8} />
        <Glyph k={group.open ? 'folderOpen' : 'folder'} />
        <NodeName $ml={5}>{group.name}</NodeName>
      </GroupRow>
      {group.kids && group.kids.map(([k, name, code, selected]) => (
        <ChildRow key={name + code}>
          <Elbow />
          <Glyph k={k} s={15} />
          <NodeName $ml={5} $bg={selected ? '#ecebdf' : undefined} $pad={selected ? 1 : 0}>
            {name} <Code>({code})</Code>
          </NodeName>
        </ChildRow>
      ))}
    </React.Fragment>
  ))
}

const PanelButtons = () => (
  <HeadBtns><Glyph k="pin" s={10} /><Glyph k="close" s={10} /></HeadBtns>
)

function NavigationPanel () {
  return (
    <NavPanel>
      <PanelHead><span>块导航栏</span><PanelButtons /></PanelHead>
      <NavButton>工程设置</NavButton>
      <NavButton>绘图输入</NavButton>
      <TreeTools>
        <svg width="36" height="14" viewBox="0 0 36 14">
          <path d="M3 0v7M-1 3.500h7" stroke="#222" strokeWidth="2" />
          <path d="M7 6v7M3.500 9.500h7" stroke="#0f7a6a" strokeWidth="2" />
          <path d="M18 3h7" stroke="#222" strokeWidth="2" />
          <path d="M25 10h9" stroke="#0f7a6a" strokeWidth="2" />
        </svg>
      </TreeTools>
      <TreeFrame>
        <Tree><TreeRows /></Tree>
        <ScrollBar>
          <ScrollBtn><svg width="9" height="6"><path d="M1 5l3.500-4L8 5" fill="none" stroke="#3a5a9a" strokeWidth="2" /></svg></ScrollBtn>
          <ScrollThumb><ThumbLines /></ScrollThumb>
          <ScrollRest />
          <ScrollBtn><svg width="9" height="6"><path d="M1 1l3.500 4L8 1" fill="none" stroke="#3a5a9a" strokeWidth="2" /></svg></ScrollBtn>
        </ScrollBar>
      </TreeFrame>
      <BottomBtn>单构件输入</BottomBtn>
    </NavPanel>
  )
}

function ComponentPanel () {
  return (
    <ListPanel>
      <PanelHead><span>构件列表</span><PanelButtons /></PanelHead>
      <TreeTools $h={26}>
        <Tool $w={62} $gap={3} $pad={6}><Glyph k="add" /><span>新建</span><Caret $m={2} /></Tool>
        <Glyph k="del" s={13} />
        <Indent $w={3} />
        <Glyph k="dup" s={14} />
      </TreeTools>
      <SearchRow>
        <SearchBox>搜索构件...</SearchBox>
        <svg width="22" height="22" viewBox="0 0 22 22"><circle cx="13" cy="9" r="6" fill="none" stroke="#5a9ad8" strokeWidth="2" /><path d="M8 14l-4 5" stroke="#5a9ad8" strokeWidth="2.500" /></svg>
      </SearchRow>
      <ListTree>
        <GroupRow>
          <Expander $ml={0}>-</Expander>
          <Indent $w={7} />
          <Glyph k="column" />
          <NodeName $ml={5}>框柱</NodeName>
        </GroupRow>
        <GroupRow>
          <Indent $w={26} />
          <Elbow $w={9} />
          <Glyph k="gear" s={13} />
          <SelectedKey>KZ-1</SelectedKey>
        </GroupRow>
      </ListTree>
    </ListPanel>
  )
}

function ViewToolbars () {
  return (
    <>
      <ViewRow $h={25}>
        <Grip $m={1} />
        {EDIT_TOOLS.map((item, i) => (item === 'sep' ? <Sep key={i} $m={3} /> : <ToolItem key={item.k} {...item} off />))}
        <More $w={10} $ml={16}>»</More>
      </ViewRow>
      <ViewRow $h={25}>
        <Grip $m={3} />
        <Combo $w={57}><span>基础层</span><Caret /></Combo>
        <Combo $w={68}><span>柱</span><Caret /></Combo>
        <Combo $w={68}><span>框柱</span><Caret /></Combo>
        <Combo $w={70}><ComboKey>KZ-1</ComboKey><Caret /></Combo>
        <Sep $m={3} />
        <ToolItem w={50} k="prop" t="属性" gap={2} />
        <ToolItem w={122} k="pen" t="编辑钢筋" gap={3} />
        <More $w={16}>»</More>
        <Grip $m={2} />
        <ToolItem w={50} k="twopt" t="两点" gap={3} />
        <More $w={12}>»</More>
        <Grip $m={2} />
      </ViewRow>
      <ViewRow $h={27}>
        <Grip $m={1} />
        <Tool $w={72} $pad={10} $gap={3}><Glyph k="cursor" s={13} /><span>选择</span><Caret $m={3} /></Tool>
        <Sep $m={2} />
        <ToolItem w={38} k="point" t="点" gap={4} pad={2} s={13} />
        <ToolItem w={62} k="rotpt" t="旋转点" gap={3} />
        <Sep $m={1} />
        <Tool $w={88} $pad={5} $gap={3}><Glyph k="smart" /><span>智能布置</span><Caret $m={1} /></Tool>
        <Sep $m={2} />
        <ToolItem w={75} k="mark" t="原位标注" gap={2} />
        <ToolItem w={74} k="table" t="图元柱表" gap={2} />
        <ToolItem w={126} k="adjust" t="调整柱端头" gap={2} />
        <More $w={10}>»</More>
      </ViewRow>
    </>
  )
}

function ReinforcementDialog () {
  return (
    <Dialog>
      <DialogTitle>钢筋显示控制面板</DialogTitle>
      <DialogBody>
        {CHECKS.map((label, i) => (
          <CheckRow key={label} $focus={i === 0}><Check>✓</Check>{label}</CheckRow>
        ))}
      </DialogBody>
    </Dialog>
  )
}

function BrowserPane () {
  return (
    <Browser>
      <AddressEdge />
      <Chrome>
        <Bookmarks>
          <BrowserCaret />
          {BOOKMARKS.map(b => (
            <Mark key={b.k} $w={b.w}><Glyph k={b.k} s={b.k === 'paw' ? 17 : 16} /><span>{b.t}</span></Mark>
          ))}
          <MarkMore>»</MarkMore>
        </Bookmarks>
        <Tabs>
          <Tab $w={176} $pl={0} $iconShift={-4}><Glyph k="weburl" s={14} /><TabText>360导航_新一代安全上网导航</TabText><TabClose>×</TabClose></Tab>
          <Tab $w={187}><Glyph k="ie" /><TabText>答疑解惑_广联达服务新干线</TabText><TabClose>×</TabClose></Tab>
          <Tab $w={140} $active><Glyph k="ie" /><TabText>基础柱的箍筋是在首层显示</TabText></Tab>
        </Tabs>
      </Chrome>
      <PageHeader>
        <Mascot width="60" height="48" viewBox="0 0 60 48">
          <path d="M0 0H59C60 24 44 38 24 38L20 47 12 44 9 38 0 36z" fill="#1e9af0" stroke="#2a6aa0" />
          <ellipse cx="29" cy="13" rx="13" ry="9" fill="#8fd0f8" />
          <text x="29" y="18" textAnchor="middle" fontFamily={WEB} fontSize="8" fontWeight="bold" fill="#2a6aa0">G</text>
          <path d="M12 0h36c-3 4-33 4-36 0z" fill="#f0c030" />
        </Mascot>
        <Brand>
          <BrandBig>答疑解惑</BrandBig>
          <BrandSub>服务新干线同城E+</BrandSub>
        </Brand>
        <CornerBit />
      </PageHeader>
      <Crumbs>答疑解惑 \我来搜 \问题详情</Crumbs>
      <QuestionBar>
        <QuestionMark>?</QuestionMark>
        <QuestionTitle>基础柱的箍筋是在首层显示。如何设置在基础层显示</QuestionTitle>
      </QuestionBar>
      <Stats>浏览12 次 | 0 回答 | 0 答得好 | 0问得好</Stats>
      <Body>如题</Body>
      <Actions>
        {ACTIONS.map(a => (
          <Action key={a.label} $color={a.color}>
            <Bubble $bg={a.bg}>
              <svg width="20" height="20" viewBox="0 0 24 24">{a.icon}</svg>
              <span>0</span>
            </Bubble>
            <ActionLabel>{a.label}</ActionLabel>
          </Action>
        ))}
      </Actions>
      <Rules>：请在以下交流中文明用语，共创和谐交流圈！</Rules>
      <AnswerLabel>来回答</AnswerLabel>
    </Browser>
  )
}

export default function App () {
  return (
    <Page>
      <Global />
      <AppWindow>
        <TitleArea>
          <TitleRow><Glyph k="app" s={12} />广小二</TitleRow>
          <UserRow>
            <UserBlank />
            <UserBar>
              <span>登录</span><Caret />
              <span>造价豆:0</span>
              <Glyph k="bell" />
              <Glyph k="note" />
              <span style={{ marginLeft: -5 }}>我要建议</span>
            </UserBar>
          </UserRow>
        </TitleArea>
        <AppToolbar />
        <Main>
          <NavigationPanel />
          <ComponentPanel />
          <Viewport>
            <ViewToolbars />
            <View3D />
          </Viewport>
        </Main>
      </AppWindow>
      <Divider />
      <BrowserPane />
      <ReinforcementDialog />
      <Annotations viewBox="0 0 1404 696">
        <ellipse cx="360" cy="119" rx="58" ry="36" fill="none" stroke={ARROW_RED} strokeWidth="3" />
        <ellipse cx="637" cy="471" rx="54" ry="164" fill="none" stroke={ARROW_RED} strokeWidth="3" />
        {ARROWS.map(([x1, y1, x2, y2]) => (
          <Arrow key={`${x2}-${y2}`} x1={x1} y1={y1} x2={x2} y2={y2} />
        ))}
      </Annotations>
    </Page>
  )
}
